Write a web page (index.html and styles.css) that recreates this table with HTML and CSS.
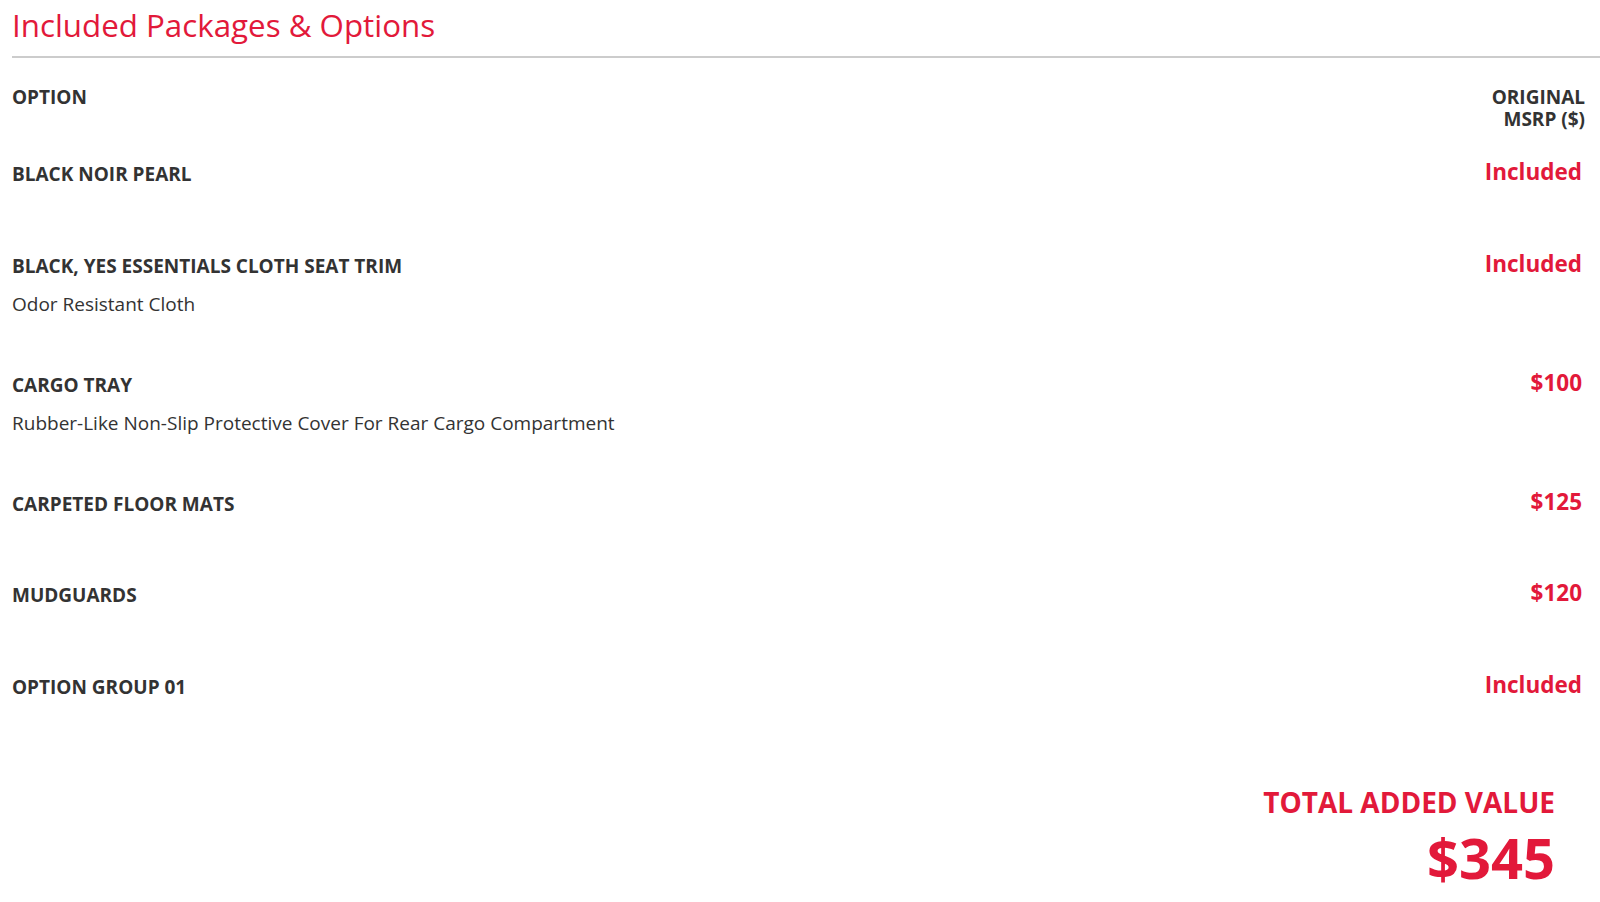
FILE: index.html
```html
<!DOCTYPE html>
<html lang="en">
<head>
<meta charset="utf-8">
<title>Included Packages &amp; Options</title>
<link rel="stylesheet" href="styles.css">
</head>
<body>
<section class="packages">
  <h2 class="packages__title">Included Packages &amp; Options</h2>
  <div class="table">
    <div class="table__head">
      <div class="head__option">OPTION</div>
      <div class="head__price"><div>ORIGINAL</div><div>MSRP ($)</div></div>
    </div>
    <div class="row">
      <div class="row__info"><div class="row__name">BLACK NOIR PEARL</div></div>
      <div class="row__price">Included</div>
    </div>
    <div class="row">
      <div class="row__info"><div class="row__name">BLACK, YES ESSENTIALS CLOTH SEAT TRIM</div><div class="row__desc">Odor Resistant Cloth</div></div>
      <div class="row__price">Included</div>
    </div>
    <div class="row">
      <div class="row__info"><div class="row__name">CARGO TRAY</div><div class="row__desc">Rubber-Like Non-Slip Protective Cover For Rear Cargo Compartment</div></div>
      <div class="row__price">$100</div>
    </div>
    <div class="row">
      <div class="row__info"><div class="row__name">CARPETED FLOOR MATS</div></div>
      <div class="row__price">$125</div>
    </div>
    <div class="row">
      <div class="row__info"><div class="row__name">MUDGUARDS</div></div>
      <div class="row__price">$120</div>
    </div>
    <div class="row">
      <div class="row__info"><div class="row__name">OPTION GROUP 01</div></div>
      <div class="row__price">Included</div>
    </div>
  </div>
  <div class="total">
    <div class="total__label">TOTAL ADDED VALUE</div>
    <div class="total__value">$345</div>
  </div>
</section>
</body>
</html>
```
FILE: styles.css
```css
html, body {
  margin: 0;
  padding: 0;
  background: #fff;
}
body {
  font-family: "Open Sans", "Liberation Sans", sans-serif;
  color: #333;
}
.packages {
  padding-left: 12px;
}
.packages__title {
  margin: 0;
  font-size: 31.3px;
  font-weight: 400;
  line-height: 40px;
  padding-top: 5px;
  padding-bottom: 11px;
  color: #e2193a;
  border-bottom: 2px solid #cccccc;
}
.table {
  padding-right: 15px;
}
.table__head {
  display: flex;
  justify-content: space-between;
  align-items: flex-start;
  padding-top: 28px;
  margin-bottom: 11px;
  font-size: 19px;
  font-weight: 700;
  line-height: 22px;
  color: #333;
}
.head__price {
  text-align: right;
}
.row {
  display: flex;
  justify-content: space-between;
  align-items: flex-start;
  box-sizing: border-box;
  min-height: 91.5px;
  padding: 20px 0 35px;
}
.row__name {
  font-size: 19px;
  font-weight: 700;
  line-height: 26px;
  color: #333;
}
.row__desc {
  margin-top: 12px;
  font-size: 19px;
  font-weight: 400;
  line-height: 26px;
  color: #333;
}
.row__price {
  font-size: 22.5px;
  font-weight: 700;
  line-height: 22px;
  color: #e2193a;
  text-align: right;
  padding-right: 3px;
}
.total {
  display: flex;
  flex-direction: column;
  align-items: flex-end;
  padding-right: 45px;
  padding-top: 38px;
  color: #e2193a;
  font-weight: 700;
}
.total__label {
  font-size: 28px;
  line-height: 38px;
}
.total__value {
  font-size: 56px;
  line-height: 72px;
}
```
